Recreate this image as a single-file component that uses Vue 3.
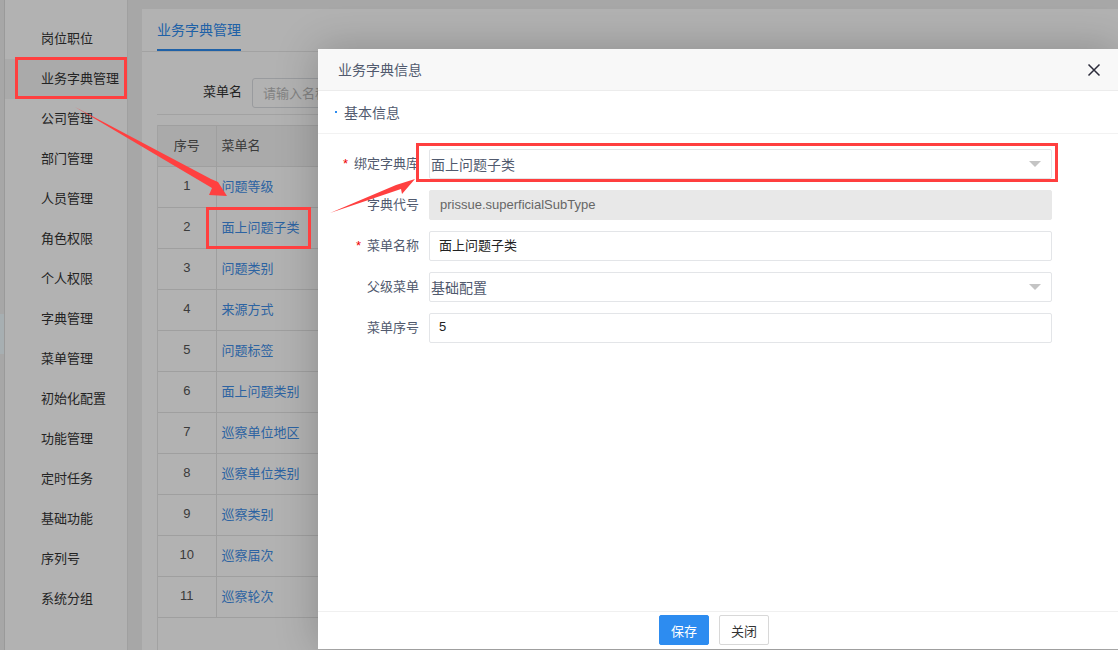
<script setup>
const menus = ['岗位职位', '业务字典管理', '公司管理', '部门管理', '人员管理', '角色权限', '个人权限', '字典管理', '菜单管理', '初始化配置', '功能管理', '定时任务', '基础功能', '序列号', '系统分组']
const rows = ['问题等级', '面上问题子类', '问题类别', '来源方式', '问题标签', '面上问题类别', '巡察单位地区', '巡察单位类别', '巡察类别', '巡察届次', '巡察轮次']
</script>

<template>
  <div class="page">
    <i class="edge-handle"></i>
    <aside class="sidebar">
      <div v-for="(m, i) in menus" :key="m" class="menu-item" :class="{ active: i === 1 }">{{ m }}</div>
    </aside>

    <main class="card">
      <div class="tabs"><span class="tab">业务字典管理</span></div>
      <div class="body">
        <div class="search">
          <label>菜单名</label>
          <input class="search-input" placeholder="请输入名称" />
        </div>
        <div class="table-wrap">
          <table>
            <thead>
              <tr><th class="no">序号</th><th class="name">菜单名</th></tr>
            </thead>
            <tbody>
              <tr v-for="(r, i) in rows" :key="r">
                <td class="no">{{ i + 1 }}</td>
                <td class="name"><a>{{ r }}</a></td>
              </tr>
            </tbody>
          </table>
        </div>
      </div>
    </main>

    <div class="mask"></div>

    <section class="modal">
      <header class="modal-head">
        <span class="modal-title">业务字典信息</span>
        <svg class="close" width="14" height="14" viewBox="0 0 14 14">
          <path d="M1.5 1.5 12.5 12.5M12.5 1.5 1.5 12.5" stroke="#2b2b3a" stroke-width="1.5" fill="none" />
        </svg>
      </header>
      <div class="section-title"><i class="dot"></i>基本信息</div>
      <form class="form">
        <div class="row">
          <label class="required">绑定字典库</label>
          <div class="select"><span>面上问题子类</span><i class="caret"></i></div>
        </div>
        <div class="row">
          <label>字典代号</label>
          <input class="input disabled" value="prissue.superficialSubType" disabled />
        </div>
        <div class="row">
          <label class="required">菜单名称</label>
          <input class="input" value="面上问题子类" />
        </div>
        <div class="row">
          <label>父级菜单</label>
          <div class="select"><span>基础配置</span><i class="caret"></i></div>
        </div>
        <div class="row">
          <label>菜单序号</label>
          <input class="input" value="5" />
        </div>
      </form>
      <footer class="modal-foot">
        <button type="button" class="btn primary">保存</button>
        <button type="button" class="btn">关闭</button>
      </footer>
    </section>

    <!-- red annotations drawn over the screenshot -->
    <div class="mark mark-menu"></div>
    <div class="mark mark-row"></div>
    <div class="mark mark-select"></div>
    <svg class="arrows" width="1118" height="650" viewBox="0 0 1118 650">
      <polygon points="75,107 211,179 218,182 227,196 209,195 212,188" fill="#ff4040" />
      <polygon points="330,213 396,185 415,179 402,194 401,189" fill="#ff4040" />
    </svg>
  </div>
</template>

<style>
html, body {
  margin: 0;
  background: #f0f0f0;
}
</style>

<style scoped>
.page {
  position: relative;
  width: 1118px;
  height: 650px;
  overflow: hidden;
  display: flex;
  align-items: stretch;
  gap: 14px;
  padding: 0 0 0 4px;
  box-sizing: border-box;
  background: #f0f0f0;
  font-family: "Liberation Sans", "Noto Sans CJK SC", sans-serif;
  font-size: 13px;
  color: #333;
}

.edge-handle {
  position: absolute;
  left: 0;
  top: 314px;
  width: 4px;
  height: 40px;
  background: #f0fbff;
}

.sidebar {
  width: 122px;
  padding-top: 19px;
  background: #fff;
  border-left: 1px solid #ddd;
  border-right: 1px solid #e6e6e6;
  flex: none;
}

.menu-item {
  height: 40px;
  line-height: 40px;
  padding-left: 36px;
  white-space: nowrap;
}

.menu-item.active {
  background: #f4f4f4;
}

.card {
  flex: 1;
  margin-top: 9px;
  background: #fff;
}

.tabs {
  height: 42px;
  padding-left: 15px;
  border-bottom: 1px solid #e8e8e8;
}

.tab {
  display: inline-block;
  height: 40px;
  line-height: 42px;
  font-size: 14px;
  color: #2d8cf0;
  border-bottom: 2px solid #2d8cf0;
}

.body {
  padding: 26px 0 0 15px;
}

.search {
  display: flex;
  gap: 10px;
  height: 36px;
  padding-left: 46px;
  margin-bottom: 10px;
  border-bottom: 1px solid #e8e8e8;
  align-items: flex-start;
}

.search label {
  line-height: 28px;
}

.search-input {
  width: 200px;
  height: 30px;
  padding: 0 10px;
  box-sizing: border-box;
  border: 1px solid #dcdee2;
  border-radius: 3px;
  font: inherit;
}

.search-input::placeholder {
  color: #bbb;
}

.table-wrap {
  height: 530px;
  border-left: 1px solid #e8e8e8;
}

table {
  width: 800px;
  border-collapse: collapse;
  table-layout: fixed;
}

th, td {
  height: 41px;
  padding: 0 0 3px;
  box-sizing: border-box;
  border-bottom: 1px solid #e4e4e4;
  border-right: 1px solid #e4e4e4;
  font-weight: normal;
  color: #555;
}

thead tr {
  background: #f4f4f4;
  border-top: 1px solid #e4e4e4;
}

.no {
  width: 58px;
  text-align: center;
}

.name {
  padding-left: 5px;
  text-align: left;
}

.name a {
  color: #3f8fe8;
}

.mask {
  position: absolute;
  inset: 0;
  background: rgba(0, 0, 0, 0.3);
}

.modal {
  position: absolute;
  left: 318px;
  top: 49px;
  width: 800px;
  height: 600px;
  display: flex;
  flex-direction: column;
  background: #fff;
  box-shadow: 0 0 40px rgba(0, 0, 0, 0.22);
}

.modal-head {
  height: 41px;
  padding: 0 17px 0 20px;
  display: flex;
  align-items: center;
  justify-content: space-between;
  background: #f8f8f8;
  border-bottom: 1px solid #ececec;
  font-size: 14px;
  color: #515a6e;
  flex: none;
}

.modal-title {
  margin-bottom: 2px;
}

.close {
  margin-top: 1px;
}

.section-title {
  height: 41px;
  padding: 0 0 1px 17px;
  border-bottom: 1px solid #f2f2f2;
  font-size: 14px;
  color: #515a6e;
  display: flex;
  align-items: center;
  gap: 7px;
  flex: none;
}

.dot {
  width: 2px;
  height: 2px;
  background: #2d8cf0;
}

.form {
  flex: 1;
  padding-top: 15px;
  display: flex;
  flex-direction: column;
  gap: 11px;
}

.row {
  display: flex;
  align-items: center;
  height: 30px;
  gap: 10px;
}

.row label {
  width: 101px;
  padding-bottom: 4px;
  text-align: right;
  color: #515a6e;
  white-space: nowrap;
}

.row label.required::before {
  content: "*";
  color: #e00;
  margin-right: 6px;
}

.select, .input {
  width: 623px;
  height: 30px;
  box-sizing: border-box;
  border: 1px solid #e3e5e8;
  border-radius: 2px;
  background: #fff;
  font: inherit;
}

.select {
  position: relative;
  padding-left: 1px;
  line-height: 31px;
  font-size: 14px;
  color: #515a6e;
}

.caret {
  position: absolute;
  right: 10px;
  top: 11px;
  border-left: 6px solid transparent;
  border-right: 6px solid transparent;
  border-top: 6px solid #c4c4c4;
}

.input {
  padding: 0 10px 3px 9px;
  color: #222;
  outline: none;
}

.input.disabled {
  padding: 0 10px 2px;
  background: #e8e8e8;
  border-color: #e8e8e8;
  color: #666;
}

.modal-foot {
  height: 34px;
  padding: 3px 8px 0 0;
  border-top: 1px solid #f0f0f0;
  display: flex;
  justify-content: center;
  align-items: flex-start;
  gap: 10px;
  flex: none;
}

.btn {
  width: 50px;
  height: 30px;
  padding: 0;
  border: 1px solid #d8d8d8;
  border-radius: 2px;
  background: #fff;
  color: #333;
  font: inherit;
}

.btn.primary {
  background: #2d8cf0;
  border-color: #2d8cf0;
  color: #fff;
}

.mark {
  position: absolute;
  box-sizing: border-box;
  border: 3px solid #ff3f3f;
}

.mark-menu {
  left: 15px;
  top: 57px;
  width: 112px;
  height: 42px;
}

.mark-row {
  left: 206px;
  top: 207px;
  width: 105px;
  height: 42px;
}

.mark-select {
  left: 416px;
  top: 143px;
  width: 642px;
  height: 39px;
}

.arrows {
  position: absolute;
  left: 0;
  top: 0;
  pointer-events: none;
}
</style>
